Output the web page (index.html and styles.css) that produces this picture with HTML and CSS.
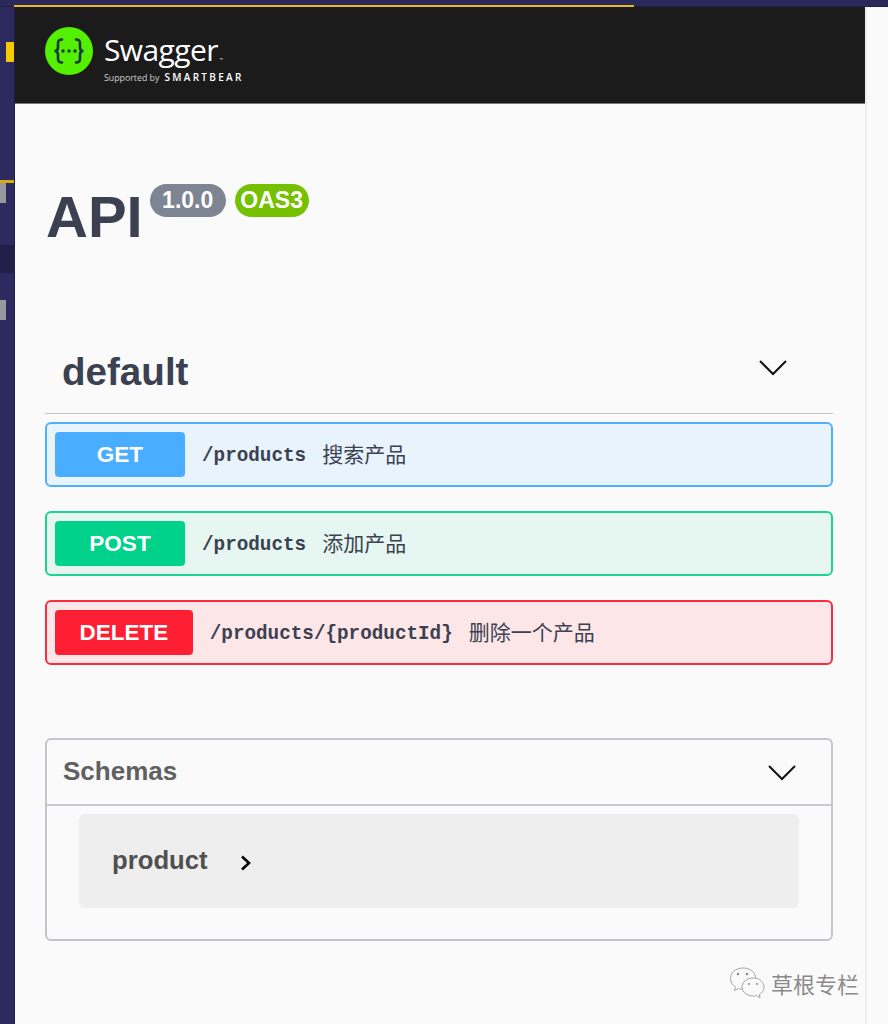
FILE: index.html
```html
<!DOCTYPE html>
<html lang="zh">
<head>
  <meta charset="UTF-8" />
  <title>Swagger UI</title>
  <link rel="stylesheet" href="styles.css">
</head>
<body>

  <div class="top-strip"><div class="top-line"></div></div>

  <div class="shell">
    <aside class="rail">
      <div class="rail-mark"></div>
      <div class="rail-line"></div>
      <div class="rail-box"></div>
      <div class="rail-band"></div>
      <div class="rail-box rail-box-2"></div>
    </aside>

    <main class="page">
      <header class="topbar">
        <svg class="logo" width="48" height="48" viewBox="0 0 48 48">
          <circle cx="24" cy="24" r="24" fill="#55f000"/>
          <g fill="none" stroke="#173647" stroke-width="2.6" stroke-linecap="round">
            <path d="M17 12.5c-3.5 0-4 1.500-4 4v4c0 2-1 3.500-3.500 3.500c2.500 0 3.500 1.500 3.500 3.500v4c0 2.500 .5 4 4 4"/>
            <path d="M31 12.500c3.500 0 4 1.500 4 4v4c0 2 1 3.500 3.500 3.500c-2.500 0-3.500 1.500-3.500 3.500v4c0 2.500-.5 4-4 4"/>
          </g>
          <g fill="#173647">
            <circle cx="18" cy="24" r="1.700"/>
            <circle cx="24" cy="24" r="1.700"/>
            <circle cx="30" cy="24" r="1.700"/>
          </g>
        </svg>
        <div class="brand">
          <div class="brand-name">Swagger<span class="tm">™</span></div>
          <div class="brand-sub"><span class="sub-small">Supported by</span><span class="sub-bear">SMARTBEAR</span></div>
        </div>
      </header>

      <div class="content">
        <div class="title-row">
          <h1>API</h1>
          <span class="badge badge-version">1.0.0</span>
          <span class="badge badge-oas">OAS3</span>
        </div>

        <div class="tag-head">
          <h2>default</h2>
          <svg class="chev" width="30" height="18" viewBox="0 0 30 18"><path d="M2 2l13 13L28 2" fill="none" stroke="#111" stroke-width="2"/></svg>
        </div>

        <div class="opblock opblock-get">
          <span class="method">GET</span>
          <span class="path">/products</span>
          <span class="desc">搜索产品</span>
        </div>
        <div class="opblock opblock-post">
          <span class="method">POST</span>
          <span class="path">/products</span>
          <span class="desc">添加产品</span>
        </div>
        <div class="opblock opblock-delete">
          <span class="method">DELETE</span>
          <span class="path">/products/{productId}</span>
          <span class="desc">删除一个产品</span>
        </div>

        <section class="schemas">
          <div class="schemas-head">
            <h4>Schemas</h4>
            <svg class="chev" width="30" height="18" viewBox="0 0 30 18"><path d="M2 2l13 13L28 2" fill="none" stroke="#111" stroke-width="2"/></svg>
          </div>
          <div class="model">
            <span class="model-name">product</span>
            <svg class="model-arrow" width="12" height="18" viewBox="0 0 12 18"><path d="M2 2.500l7 6.500l-7 6.500" fill="none" stroke="#000" stroke-width="2.600"/></svg>
          </div>
        </section>
      </div>
    </main>

    <div class="gutter"></div>
  </div>

  <div class="watermark">
    <svg width="38" height="34" viewBox="0 0 38 34">
      <g fill="#fafafa" stroke="#a5a5a5" stroke-width="1">
        <path d="M14 2C7 2 1.500 6.500 1.500 12.500c0 3.500 2 6.500 5 8.500l-1 3.500l4-2c1.500 .5 3 .8 4.500 .8c7 0 12.500-4.500 12.500-10.800S21 2 14 2z"/>
        <path d="M24 12c-6 0-11 4-11 9s5 9 11 9c1.200 0 2.400-.2 3.500-.5l3.500 2.500l-.8-3.500c3-1.700 4.800-4.300 4.800-7.500c0-5-4.500-9-10.500-9z"/>
      </g>
      <g fill="#888">
        <circle cx="9" cy="8" r="1.200"/><circle cx="18" cy="8" r="1.200"/>
        <circle cx="20" cy="18" r="1"/><circle cx="28" cy="18" r="1"/>
      </g>
    </svg>
    <span>草根专栏</span>
  </div>

</body>
</html>
```

FILE: styles.css
```css
* {
  box-sizing: border-box;
}

html, body {
  margin: 0;
  height: 100%;
}

body {
  font-family: "Liberation Sans", Arial, sans-serif;
  background: #fafafa;
  color: #3b4151;
  height: 1024px;
  overflow: hidden;
}

h1, h2, h4 {
  margin: 0;
}

.top-strip {
  height: 7px;
  background: #2b285c;
  border-bottom: 1px solid #201e45;
  padding: 5px 0 0 14px;
}

.top-line {
  width: 620px;
  height: 2px;
  background: #e9b926;
}

.shell {
  display: flex;
  height: 1017px;
}

.rail {
  width: 15px;
  background: #2d2a60;
  border-right: 1px solid #1f1d47;
  flex: none;
}

.rail-mark {
  width: 8px;
  height: 20px;
  margin: 35px 0 0 6px;
  background: #f5c800;
}

.rail-line {
  height: 3px;
  margin-top: 118px;
  background: #d9ac0e;
}

.rail-box {
  width: 6px;
  height: 20px;
  background: #98989f;
}

.rail-band {
  height: 28px;
  margin-top: 42px;
  background: #211f47;
}

.rail-box-2 {
  margin-top: 27px;
}

.page {
  width: 850px;
  flex: none;
}

.topbar {
  height: 97px;
  background: #1b1b1b;
  border-bottom: 1px solid #777;
  display: flex;
  align-items: flex-start;
  padding: 20px 0 0 30px;
}

.brand {
  margin-left: 11px;
  color: #fff;
}

.brand-name {
  font-family: "Open Sans", sans-serif;
  font-weight: 400;
  font-size: 30px;
  line-height: 38px;
  margin-top: 4px;
  letter-spacing: -0.6px;
}

.tm {
  font-size: 4px;
  line-height: 0;
  margin-left: 2px;
}

.brand-sub {
  display: flex;
  align-items: baseline;
  gap: 5px;
  line-height: 12px;
  margin-top: 2px;
}

.sub-small {
  font-family: "Open Sans", sans-serif;
  font-size: 8.8px;
  color: #d0d0d0;
}

.sub-bear {
  font-family: "Open Sans", sans-serif;
  font-size: 10px;
  font-weight: 600;
  letter-spacing: 2.3px;
}

.content {
  padding: 0 32px 0 30px;
}

.title-row {
  display: flex;
  align-items: flex-start;
  padding-top: 80px;
  height: 205px;
}

h1 {
  margin-left: 1px;
  font-size: 58px;
  font-weight: 700;
  line-height: 66px;
}

.badge {
  height: 33px;
  border-radius: 17px;
  color: #fff;
  font-size: 23px;
  font-weight: 700;
  line-height: 33px;
  text-align: center;
}

.badge-version {
  width: 76px;
  margin-left: 7px;
  background: #7d8492;
}

.badge-oas {
  width: 74px;
  margin-left: 9px;
  background: #75c000;
}

.tag-head {
  height: 105px;
  border-bottom: 1px solid #c4c5c9;
  padding: 0 45px 0 17px;
  display: flex;
  align-items: center;
  justify-content: space-between;
}

h2 {
  font-size: 38.6px;
  font-weight: 700;
  line-height: 46px;
  margin-top: 22px;
}

.tag-head .chev {
  margin-top: 14px;
}

.opblock {
  height: 65px;
  margin-top: 24px;
  border: 2px solid;
  border-radius: 6px;
  padding: 8px;
  display: flex;
  align-items: center;
}

.tag-head + .opblock {
  margin-top: 8px;
}

.opblock-get {
  background: #e9f3fc;
  border-color: #4fb0fe;
}

.opblock-post {
  background: #e6f6f0;
  border-color: #1dd292;
}

.opblock-delete {
  background: #fde6e7;
  border-color: #fb2c41;
}

.method {
  min-width: 130px;
  height: 45px;
  padding: 0 24.5px;
  border-radius: 4px;
  color: #fff;
  font-size: 22.5px;
  font-weight: 700;
  line-height: 45px;
  text-align: center;
}

.opblock-get .method {
  background: #49aeff;
}

.opblock-post .method {
  background: #00d18b;
}

.opblock-delete .method {
  background: #ff1f35;
}

.path {
  margin: 3px 0 0 17px;
  font-family: "Liberation Mono", monospace;
  font-size: 19.300px;
  font-weight: 700;
}

.desc {
  margin: -3px 0 0 16px;
  font-family: "Noto Sans CJK SC", sans-serif;
  font-size: 21px;
}

.schemas {
  height: 203px;
  margin-top: 73px;
  border: 2px solid #c4c5cb;
  border-radius: 6px;
}

.schemas-head {
  height: 66px;
  border-bottom: 2px solid #c9cacf;
  padding: 0 34px 0 16px;
  display: flex;
  align-items: center;
  justify-content: space-between;
}

h4 {
  margin-top: -2px;
  font-size: 26px;
  font-weight: 700;
  color: #606060;
}

.schemas-head .chev {
  margin-top: 2px;
}

.model {
  height: 94px;
  margin: 8px 32px 0;
  border-radius: 6px;
  background: #eee;
  padding-left: 33px;
  display: flex;
  align-items: center;
  gap: 32px;
}

.model-name {
  margin-top: -2px;
  font-size: 25.700px;
  font-weight: 700;
  color: #505050;
}

.model-arrow {
  margin-top: 4px;
}

.gutter {
  width: 2px;
  background: #eee;
  flex: none;
}

.watermark {
  position: absolute;
  left: 729px;
  top: 966px;
  display: flex;
  align-items: center;
  gap: 4px;
  font-family: "Noto Sans CJK SC", sans-serif;
  font-size: 22px;
  color: #8a8a8a;
}
```
